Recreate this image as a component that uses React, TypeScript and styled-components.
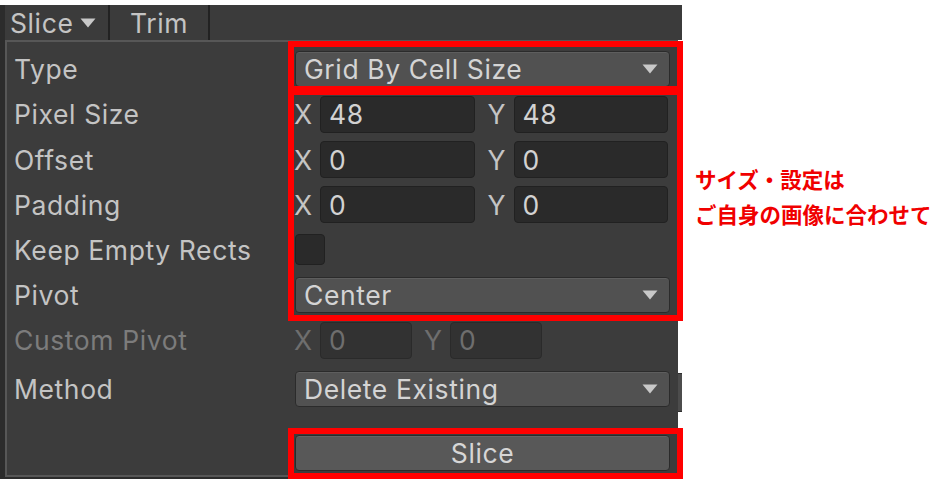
import React from 'react';
import styled, { createGlobalStyle } from 'styled-components';

const Global = createGlobalStyle`
  html, body { margin: 0; padding: 0; background: #ffffff; }
  body { font-family: Inter, "Noto Sans", sans-serif; }
  * { box-sizing: border-box; }
`;

const Page = styled.div`
  position: relative;
  width: 933px;
  height: 479px;
  overflow: hidden;
  display: flex;
  align-items: flex-start;
  background: #ffffff;
`;

const Panel = styled.div`
  margin-top: 5px;
  width: 678px;
  height: 474px;
  background: #2c2c2c;
  display: flex;
  flex-direction: column;
  flex-shrink: 0;
`;

const TabBar = styled.div`
  height: 35px;
  margin-left: 5px;
  margin-right: -4px;
  background: #3b3b3b;
  display: flex;
  align-items: stretch;
`;

const Tab = styled.div<{ $w: number; $pl?: number }>`
  width: ${p => p.$w}px;
  display: flex;
  align-items: center;
  justify-content: ${p => (p.$pl !== undefined ? 'flex-start' : 'center')};
  padding-left: ${p => p.$pl ?? 0}px;
  gap: 7px;
  color: #c4c4c4;
  font-size: 26.5px;
  letter-spacing: 0.6px;
  border-right: 2px solid #222222;
`;

const Caret = styled.svg`
  width: 16px;
  height: 10px;
  flex-shrink: 0;
`;

const Frame = styled.div`
  margin-left: 5px;
  height: 437px;
  background: #3c3c3c;
  border-top: 2px solid #575757;
  border-left: 2px solid #575757;
  border-bottom: 2px solid #575757;
  padding: 4px 10px 0 7px;
  display: flex;
  flex-direction: column;
`;

const Row = styled.div<{ $h: number; $mt?: number }>`
  height: ${p => p.$h}px;
  margin-top: ${p => p.$mt ?? 0}px;
  display: grid;
  grid-template-columns: 281px 375px;
  align-items: center;
`;

const Label = styled.div<{ $disabled?: boolean }>`
  color: ${p => (p.$disabled ? '#7c7c7c' : '#c4c4c4')};
  font-size: 26.5px;
  letter-spacing: 0.6px;
  white-space: nowrap;
`;

const Dropdown = styled.div`
  height: 36px;
  width: 375px;
  background: #515151;
  border: 1px solid #2b2b2b;
  border-radius: 4px;
  box-shadow: inset 0 1px 0 #5e5e5e;
  display: flex;
  align-items: center;
  justify-content: space-between;
  padding: 0 11px 0 8px;
  color: #d4d4d4;
  font-size: 26.5px;
  letter-spacing: 0.6px;
`;

const Vector = styled.div<{ $gap: number }>`
  display: flex;
  align-items: center;
  gap: ${p => p.$gap}px;
  width: 373px;
`;

const Pair = styled.div<{ $flex?: boolean }>`
  display: flex;
  align-items: center;
  flex: ${p => (p.$flex ? '1 1 0' : '0 0 auto')};
`;

const Axis = styled.div<{ $disabled?: boolean }>`
  width: 26px;
  color: ${p => (p.$disabled ? '#6e6e6e' : '#c4c4c4')};
  font-size: 26.5px;
  margin-left: -1px;
`;

const Field = styled.div<{ $w?: number; $disabled?: boolean }>`
  height: 37px;
  ${p => (p.$w ? `width: ${p.$w}px;` : 'flex: 1 1 0;')}
  background: ${p => (p.$disabled ? '#323232' : '#2a2a2a')};
  border: 1px solid ${p => (p.$disabled ? '#2a2a2a' : '#212121')};
  border-radius: 4px;
  display: flex;
  align-items: center;
  padding-left: 8px;
  color: ${p => (p.$disabled ? '#6e6e6e' : '#d2d2d2')};
  font-size: 26.5px;
  letter-spacing: 0.6px;
`;

const Check = styled.div`
  width: 30px;
  height: 31px;
  background: #2a2a2a;
  border: 1px solid #212121;
  border-radius: 4px;
`;

const Button = styled.div`
  height: 36px;
  width: 375px;
  background: #585858;
  border: 1px solid #2a2a2a;
  border-radius: 4px;
  box-shadow: inset 0 1px 0 #646464;
  display: flex;
  align-items: center;
  justify-content: center;
  color: #d6d6d6;
  font-size: 26.5px;
  letter-spacing: 0.6px;
`;

const Nub = styled.div`
  margin-top: 373px;
  width: 4px;
  height: 39px;
  background: #4c4c4c;
  border-top: 1px solid #2e2e2e;
  border-bottom: 1px solid #2e2e2e;
  flex-shrink: 0;
`;

const Note = styled.div`
  margin: 161px 0 0 13px;
  color: #f00000;
  font-family: "Noto Sans CJK JP", "Noto Sans", sans-serif;
  font-weight: 700;
  font-size: 21.5px;
  line-height: 35px;
  white-space: nowrap;
`;

const Highlight = styled.div<{ $x: number; $y: number; $w: number; $h: number }>`
  position: absolute;
  left: ${p => p.$x}px;
  top: ${p => p.$y}px;
  width: ${p => p.$w}px;
  height: ${p => p.$h}px;
  border: 6px solid #ff0000;
  pointer-events: none;
`;

const Arrow = () => (
  <Caret viewBox="0 0 16 10">
    <path d="M0.5 0.5 H15.5 L8 9.5 Z" fill="#c8c8c8" />
  </Caret>
);

const Select = ({ value }: { value: string }) => (
  <Dropdown>
    <span>{value}</span>
    <Arrow />
  </Dropdown>
);

const Vec = ({ x, y }: { x: string; y: string }) => (
  <Vector $gap={14}>
    <Pair $flex>
      <Axis>X</Axis>
      <Field>{x}</Field>
    </Pair>
    <Pair $flex>
      <Axis>Y</Axis>
      <Field>{y}</Field>
    </Pair>
  </Vector>
);

export default function App() {
  return (
    <Page>
      <Global />
      <Panel>
        <TabBar>
          <Tab $w={105} $pl={5}>
            <span>Slice</span>
            <Arrow />
          </Tab>
          <Tab $w={100}>Trim</Tab>
        </TabBar>
        <Frame>
          <Row $h={45}>
            <Label>Type</Label>
            <Select value="Grid By Cell Size" />
          </Row>
          <Row $h={46}>
            <Label>Pixel Size</Label>
            <Vec x="48" y="48" />
          </Row>
          <Row $h={45}>
            <Label>Offset</Label>
            <Vec x="0" y="0" />
          </Row>
          <Row $h={45}>
            <Label>Padding</Label>
            <Vec x="0" y="0" />
          </Row>
          <Row $h={45}>
            <Label>Keep Empty Rects</Label>
            <Check />
          </Row>
          <Row $h={45}>
            <Label>Pivot</Label>
            <Select value="Center" />
          </Row>
          <Row $h={46}>
            <Label $disabled>Custom Pivot</Label>
            <Vector $gap={13}>
              <Pair>
                <Axis $disabled>X</Axis>
                <Field $w={92} $disabled>0</Field>
              </Pair>
              <Pair>
                <Axis $disabled>Y</Axis>
                <Field $w={92} $disabled>0</Field>
              </Pair>
            </Vector>
          </Row>
          <Row $h={51}>
            <Label>Method</Label>
            <Select value="Delete Existing" />
          </Row>
          <Row $h={45} $mt={16}>
            <span />
            <Button>Slice</Button>
          </Row>
        </Frame>
      </Panel>
      <Nub />
      <Note>
        <div>サイズ・設定は</div>
        <div>ご自身の画像に合わせて</div>
      </Note>
      <Highlight $x={288} $y={41} $w={395} $h={51} />
      <Highlight $x={288} $y={89} $w={395} $h={232} />
      <Highlight $x={288} $y={428} $w={395} $h={51} />
    </Page>
  );
}
